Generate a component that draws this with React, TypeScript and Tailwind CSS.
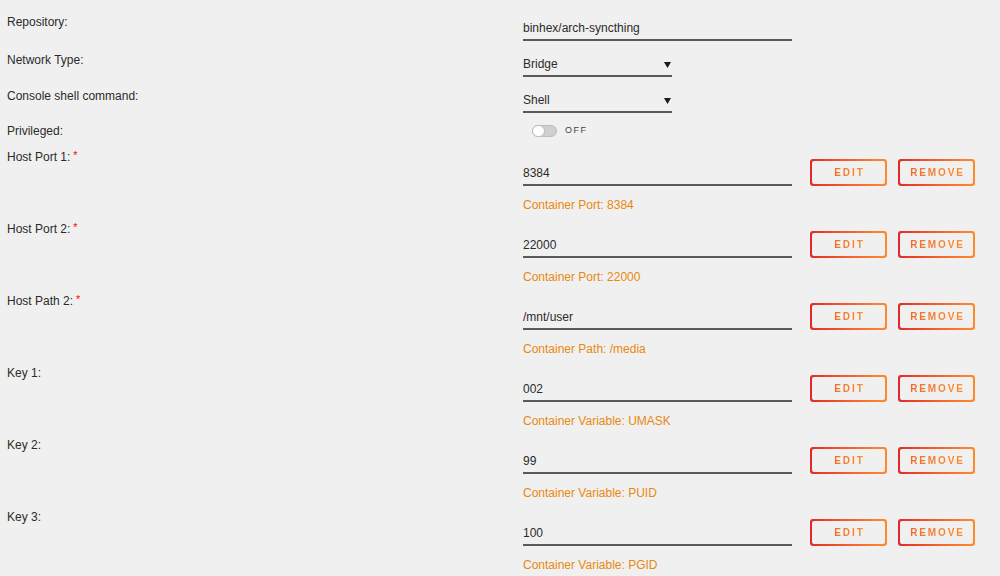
import React from "react";

const font = { fontFamily: '"Liberation Sans", Arial, sans-serif' };

function Label({ text, required }: { text: string; required?: boolean }) {
  return (
    <div className="w-[523px] shrink-0 pl-[7px] text-[12px] leading-[16px] text-[#2b2b2b]">
      {text}
      {required && <span className="ml-[3px] align-top text-[11px] leading-[12px] text-[#f00]">*</span>}
    </div>
  );
}

function GradButton({ text }: { text: string }) {
  return (
    <div className="h-[27px] w-[77px] rounded-[3px] bg-gradient-to-r from-[#e22828] to-[#ff8a2d] p-[2px]">
      <div className="flex h-full w-full items-center justify-center rounded-[2px] bg-[#f0f0f0]">
        <span className="bg-gradient-to-r from-[#f26a2a] to-[#ff8c2f] bg-clip-text pl-[2px] text-[10px] font-bold tracking-[1.9px] text-transparent">
          {text}
        </span>
      </div>
    </div>
  );
}

function Arrow() {
  return (
    <svg width="7" height="7" viewBox="0 0 7 7" className="mr-[1px]">
      <polygon points="0,1 7,1 3.5,7" fill="#1a1a1a" />
    </svg>
  );
}

function EntryRow({ label, value, help }: { label: string; value: string; help: string }) {
  return (
    <div className="flex h-[72px] items-start">
      <Label text={label} required={label.startsWith("Host")} />
      <div className="flex flex-col">
        <div className="flex items-start">
          <div className="mt-[16px] w-[269px] border-b-2 border-[#5a5a5a] pb-[3px] text-[12px] leading-[16px] text-[#2b2b2b]">
            {value}
          </div>
          <div className="ml-[18px] mt-[10px] flex gap-[11px]">
            <GradButton text="EDIT" />
            <GradButton text="REMOVE" />
          </div>
        </div>
        <div className="mt-[11px] text-[12px] leading-[16px] text-[#e8890f]">{help}</div>
      </div>
    </div>
  );
}

export default function App() {
  const rows = [
    { label: "Host Port 1:", value: "8384", help: "Container Port: 8384" },
    { label: "Host Port 2:", value: "22000", help: "Container Port: 22000" },
    { label: "Host Path 2:", value: "/mnt/user", help: "Container Path: /media" },
    { label: "Key 1:", value: "002", help: "Container Variable: UMASK" },
    { label: "Key 2:", value: "99", help: "Container Variable: PUID" },
    { label: "Key 3:", value: "100", help: "Container Variable: PGID" },
  ];
  return (
    <div className="h-[576px] w-[1000px] overflow-hidden bg-[#f0f0f0] pt-[14px]" style={font}>
      <div className="flex h-[38px] items-start">
        <Label text="Repository:" />
        <div className="mt-[6px] w-[269px] border-b-2 border-[#5a5a5a] pb-[3px] text-[12px] leading-[16px] text-[#2b2b2b]">
          binhex/arch-syncthing
        </div>
      </div>
      <div className="flex h-[36px] items-start">
        <Label text="Network Type:" />
        <div className="mt-[4px] flex w-[149px] items-center justify-between border-b-2 border-[#5a5a5a] pb-[3px] text-[12px] leading-[16px] text-[#2b2b2b]">
          <span>Bridge</span>
          <Arrow />
        </div>
      </div>
      <div className="flex h-[35px] items-start">
        <Label text="Console shell command:" />
        <div className="mt-[4px] flex w-[149px] items-center justify-between border-b-2 border-[#5a5a5a] pb-[3px] text-[12px] leading-[16px] text-[#2b2b2b]">
          <span>Shell</span>
          <Arrow />
        </div>
      </div>
      <div className="flex h-[26px] items-start">
        <Label text="Privileged:" />
        <div className="ml-[9px] mt-[1px] flex items-center">
          <div className="relative h-[12px] w-[25px] rounded-full border border-[#bdbdbd] bg-[#cfcfcf]">
            <div className="absolute left-[-1px] top-[-1px] h-[12px] w-[13px] rounded-full border border-[#bdbdbd] bg-white" />
          </div>
          <span className="ml-[8px] text-[9px] tracking-[1.5px] text-[#444]">OFF</span>
        </div>
      </div>
      {rows.map((r) => (
        <EntryRow key={r.label} {...r} />
      ))}
    </div>
  );
}
